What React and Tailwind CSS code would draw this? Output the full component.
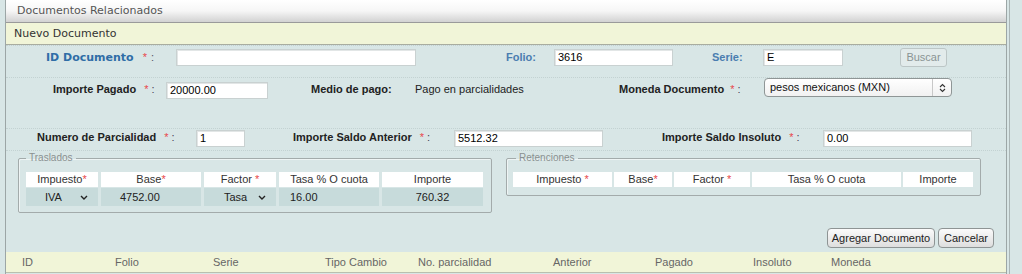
import React from "react";

const ARIAL = "font-['Liberation_Sans',Arial,sans-serif]";
const DEJAVU = "font-['DejaVu_Sans',Verdana,sans-serif]";

function Input({ w, value, cls = "" }) {
  return (
    <div
      className={`h-[17px] bg-white border border-[#c9d1d1] shadow-[inset_1px_1px_0_#e2e6e6] pl-[3px] text-[11px] leading-[15px] text-black ${ARIAL} ${cls}`}
      style={{ width: w }}
    >
      {value}
    </div>
  );
}

function Req({ gap = "ml-[6px]" }) {
  return (
    <>
      <span className={`${gap} text-[#e8474a] font-normal`}>*</span>
      <span className="ml-[3px] font-normal text-[#445]">:</span>
    </>
  );
}

function Chevron() {
  return (
    <svg width="8" height="5" viewBox="0 0 8 5" className="block">
      <path d="M1 1 L4 4 L7 1" fill="none" stroke="#222" strokeWidth="1.4" />
    </svg>
  );
}

export default function App() {
  return (
    <div className={`w-[1022px] h-[274px] overflow-hidden bg-[#d8e6e6] flex ${ARIAL}`}>
      <div className="w-[5px] shrink-0" />
      <div className="w-[1002px] shrink-0 h-[274px] border-l border-r border-[#9ca6a6] flex flex-col">
        {/* header */}
        <div className={`h-[23px] shrink-0 border-b border-[#9a9a9a] bg-gradient-to-b from-white via-[#f6f6f6] to-[#d2d2d2] pl-[11px] text-[11px] leading-[22px] text-[#555] ${DEJAVU}`}>
          Documentos Relacionados
        </div>
        {/* nuevo documento */}
        <div className={`h-[22px] shrink-0 border-b border-[#a9ada0] bg-[#f1f5d8] pl-[8px] text-[11px] leading-[21px] text-[#333] ${DEJAVU}`}>
          Nuevo Documento
        </div>

        {/* row 1 */}
        <div className="h-[23px] shrink-0 flex items-center border-t border-dotted border-[#c3d2d2]">
          <div className="w-[40px] shrink-0" />
          <div className="w-[130px] shrink-0 text-[11px] leading-[14px] whitespace-nowrap">
            <span className={`font-bold text-[#2f6da6] ${DEJAVU}`}>ID Documento</span>
            <span className="ml-[9px] text-[#e8474a]">*</span>
            <span className="ml-[4px] text-[#556]">:</span>
          </div>
          <Input w={240} value="" />
          <div className="w-[90px] shrink-0" />
          <div className="w-[48px] shrink-0 text-[11px] font-bold text-[#4a7db0]">Folio:</div>
          <Input w={119} value="3616" />
          <div className="w-[39px] shrink-0" />
          <div className="w-[51px] shrink-0 text-[11px] font-bold text-[#4a7db0]">Serie:</div>
          <Input w={80} value="E" />
          <div className="w-[57px] shrink-0" />
          <div className="w-[47px] h-[19px] shrink-0 rounded-[3px] border border-[#bcc6c6] bg-[#e2ebeb] text-[11px] leading-[17px] text-center text-[#8a9494]">
            Buscar
          </div>
        </div>

        {/* row 2 */}
        <div className="mt-[9px] h-[23px] shrink-0 flex items-center border-t border-dotted border-[#c3d2d2]">
          <div className="w-[47px] shrink-0" />
          <div className="w-[113px] shrink-0 text-[11px] font-bold text-[#222] whitespace-nowrap">
            Importe Pagado<Req gap="ml-[8px]" />
          </div>
          <Input w={102} value="20000.00" cls="self-start mt-[4px]" />
          <div className="w-[43px] shrink-0" />
          <div className="w-[104px] shrink-0 text-[11px] font-bold text-[#222]">Medio de pago:</div>
          <div className="w-[204px] shrink-0 text-[11px] text-[#222]">Pago en parcialidades</div>
          <div className="w-[145px] shrink-0 text-[11px] font-bold text-[#222] whitespace-nowrap">
            Moneda Documento<Req gap="ml-[6px]" />
          </div>
          <div className="self-start w-[188px] h-[19px] shrink-0 rounded-[4px] border border-[#8f9696] bg-gradient-to-b from-white to-[#f1f1f1] flex items-center">
            <div className="flex-1 pl-[5px] text-[11px] leading-[17px] text-[#111]">pesos mexicanos (MXN)</div>
            <div className="w-px h-[17px] bg-[#c8c8c8]" />
            <div className="w-[18px] flex items-center justify-center">
              <svg width="7" height="10" viewBox="0 0 7 10" className="block">
                <path d="M1 4 L3.5 1.5 L6 4 M1 6 L3.5 8.5 L6 6" fill="none" stroke="#333" strokeWidth="1.1" />
              </svg>
            </div>
          </div>
        </div>

        {/* row 3 */}
        <div className="mt-[28px] h-[23px] shrink-0 flex items-start border-t border-b border-dotted border-[#c3d2d2]">
          <div className="w-[31px] shrink-0" />
          <div className="w-[159px] shrink-0 mt-[1px] text-[11px] leading-[14px] font-bold text-[#222] whitespace-nowrap">
            Numero de Parcialidad<Req gap="ml-[8px]" />
          </div>
          <Input w={49} value="1" cls="mt-[1px] h-[16px]" />
          <div className="w-[48px] shrink-0" />
          <div className="w-[161px] shrink-0 mt-[1px] text-[11px] leading-[14px] font-bold text-[#222] whitespace-nowrap">
            Importe Saldo Anterior<Req gap="ml-[8px]" />
          </div>
          <Input w={149} value="5512.32" cls="mt-[1px] h-[16px]" />
          <div className="w-[59px] shrink-0" />
          <div className="w-[161px] shrink-0 mt-[1px] text-[11px] leading-[14px] font-bold text-[#222] whitespace-nowrap">
            Importe Saldo Insoluto<Req gap="ml-[8px]" />
          </div>
          <Input w={149} value="0.00" cls="mt-[1px] h-[16px]" />
        </div>

        {/* fieldsets */}
        <div className="mt-[1px] flex items-start shrink-0">
          <fieldset className="ml-[12px] w-[474px] px-[7px] pb-[6px] border border-[#a3abab] rounded-[2px] shadow-[inset_1px_1px_0_#eef4f4]">
            <legend className="px-[3px] text-[10px] leading-[12px] text-[#8a9090]">Traslados</legend>
            <div className="mt-[8px] flex gap-[3px] text-[11px] leading-[15px] text-[#333] text-center">
              <div className="w-[72px] h-[15px] bg-white">Impuesto<span className="text-[#e8474a]">*</span></div>
              <div className="w-[100px] h-[15px] bg-white">Base<span className="text-[#e8474a]">*</span></div>
              <div className="w-[72px] h-[15px] bg-white">Factor <span className="text-[#e8474a]">*</span></div>
              <div className="w-[100px] h-[15px] bg-white">Tasa % O cuota</div>
              <div className="w-[101px] h-[15px] bg-white">Importe</div>
            </div>
            <div className="mt-[1px] flex gap-[3px] text-[11px] text-[#222]">
              <div className="w-[72px] h-[18px] bg-[#c7dbdb] flex items-center">
                <span className="ml-[19px] w-[35px]">IVA</span>
                <Chevron />
              </div>
              <div className="w-[100px] h-[18px] bg-[#c7dbdb] flex items-center pl-[19px]">4752.00</div>
              <div className="w-[72px] h-[18px] bg-[#c7dbdb] flex items-center">
                <span className="ml-[20px] w-[34px]">Tasa</span>
                <Chevron />
              </div>
              <div className="w-[100px] h-[18px] bg-[#c7dbdb] flex items-center pl-[11px]">16.00</div>
              <div className="w-[101px] h-[18px] bg-[#c7dbdb] flex items-center justify-center">760.32</div>
            </div>
          </fieldset>
          <fieldset className="ml-[14px] w-[475px] px-[6px] pb-[8px] border border-[#a3abab] rounded-[2px] shadow-[inset_1px_1px_0_#eef4f4]">
            <legend className="ml-[3px] px-[3px] text-[10px] leading-[12px] text-[#8a9090]">Retenciones</legend>
            <div className="mt-[8px] flex gap-[2px] text-[11px] leading-[15px] text-[#333] text-center">
              <div className="w-[99px] h-[15px] bg-white">Impuesto <span className="text-[#e8474a]">*</span></div>
              <div className="w-[58px] h-[15px] bg-white">Base<span className="text-[#e8474a]">*</span></div>
              <div className="w-[76px] h-[15px] bg-white">Factor <span className="text-[#e8474a]">*</span></div>
              <div className="w-[149px] h-[15px] bg-white">Tasa % O cuota</div>
              <div className="w-[70px] h-[15px] bg-white">Importe</div>
            </div>
          </fieldset>
        </div>

        {/* buttons */}
        <div className="mt-[15px] flex justify-end gap-[3px] pr-[12px] shrink-0">
          <div className="w-[108px] h-[20px] rounded-[4px] border border-[#8e9494] bg-gradient-to-b from-[#fbfbfb] to-[#dedede] text-[11px] leading-[18px] text-center text-[#222]">
            Agregar Documento
          </div>
          <div className="w-[56px] h-[20px] rounded-[4px] border border-[#8e9494] bg-gradient-to-b from-[#fbfbfb] to-[#dedede] text-[11px] leading-[18px] text-center text-[#222]">
            Cancelar
          </div>
        </div>

        {/* bottom table header */}
        <div className="mt-[4px] h-[21px] shrink-0 bg-[#f1f5d8] border-b border-[#b9bfae] flex items-center text-[11px] text-[#666]">
          <div className="w-[16px]" />
          <div className="w-[93px]">ID</div>
          <div className="w-[98px]">Folio</div>
          <div className="w-[112px]">Serie</div>
          <div className="w-[93px]">Tipo Cambio</div>
          <div className="w-[135px]">No. parcialidad</div>
          <div className="w-[102px]">Anterior</div>
          <div className="w-[98px]">Pagado</div>
          <div className="w-[78px]">Insoluto</div>
          <div className="w-[80px]">Moneda</div>
        </div>
      </div>
      <div className="w-[2px] shrink-0" />
      <div className="w-px shrink-0 h-[274px] bg-[#aab5b5]" />
    </div>
  );
}
